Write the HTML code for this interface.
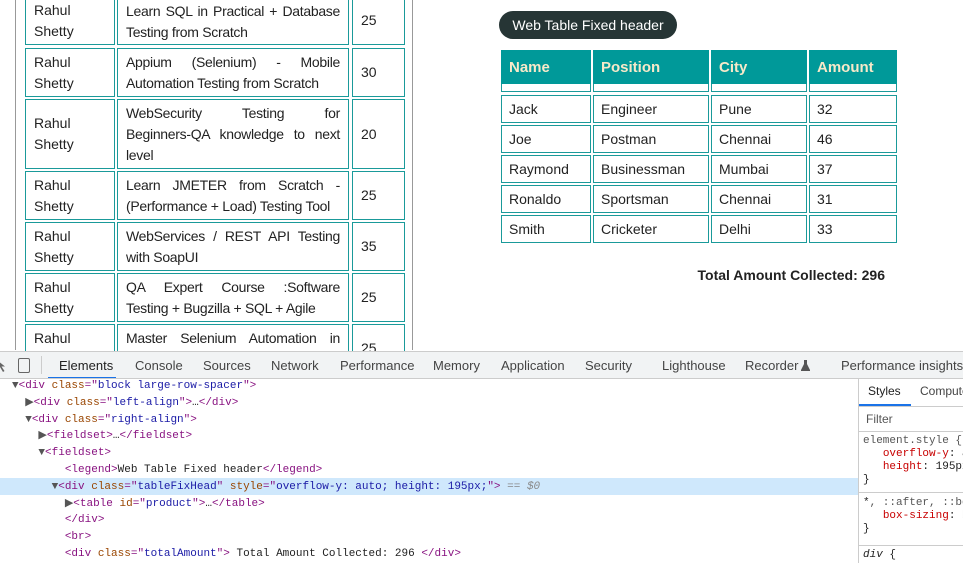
<!DOCTYPE html>
<html><head><meta charset="utf-8"><style>
*{box-sizing:border-box;margin:0;padding:0}
body{width:963px;height:563px;overflow:hidden;background:#fff;font-family:"Liberation Sans",sans-serif;position:relative;color:#222}
.c{position:absolute;border:1px solid #1a9a9a;font-size:14px;line-height:21px;padding:0 8px;display:flex;align-items:center}
.j{display:block;padding-top:0;font-size:14px;letter-spacing:-0.3px;white-space:nowrap}
.j div{text-align:justify;text-align-last:justify}
.j div.l{text-align-last:left}
.h{position:absolute;background:#009999;color:#f7e9c9;font-weight:bold;font-size:15px;padding:0 8px;display:flex;align-items:center;height:34px;top:50px}
.r{position:absolute;border:1px solid #1a9a9a;font-size:14px;padding:0 7px;display:flex;align-items:center;height:28px;color:#222}
.dt{position:absolute;top:351px;left:0;width:963px;height:28px;background:#f1f3f4;border-top:1px solid #ccc;border-bottom:1px solid #ccc;font-size:13px;color:#444;white-space:nowrap;overflow:hidden}
.dt span{position:absolute;top:6px}
.code{position:absolute;font-family:"Liberation Mono",monospace;font-size:11px;line-height:16.8px;left:12px;top:378px;white-space:pre;color:#222}
.tg{color:#881280}.at{color:#994500}.av{color:#1a1aa6}
.sty{position:absolute;left:858px;top:379px;width:105px;height:184px;border-left:1px solid #ccc;background:#fff;font-family:"Liberation Mono",monospace;font-size:11px;line-height:13px}
</style></head><body>
<div style="position:absolute;left:15px;top:0;width:1px;height:350px;background:#999"></div>
<div style="position:absolute;left:412px;top:0;width:1px;height:350px;background:#999"></div>

<div class="c" style="left:25px;top:-4px;width:90px;height:49px">Rahul<br>Shetty</div>
<div class="c j" style="left:117px;top:-4px;width:232px;height:49px;padding-top:4px"><div>Learn SQL in Practical + Database</div><div class="l">Testing from Scratch</div></div>
<div class="c" style="left:352px;top:-4px;width:53px;height:49px">25</div>

<div class="c" style="left:25px;top:48px;width:90px;height:49px">Rahul<br>Shetty</div>
<div class="c j" style="left:117px;top:48px;width:232px;height:49px;padding-top:3px"><div>Appium (Selenium) - Mobile</div><div class="l">Automation Testing from Scratch</div></div>
<div class="c" style="left:352px;top:48px;width:53px;height:49px">30</div>

<div class="c" style="left:25px;top:99px;width:90px;height:70px">Rahul<br>Shetty</div>
<div class="c j" style="left:117px;top:99px;width:232px;height:70px;padding-top:3px"><div>WebSecurity Testing for</div><div>Beginners-QA knowledge to next</div><div class="l">level</div></div>
<div class="c" style="left:352px;top:99px;width:53px;height:70px">20</div>

<div class="c" style="left:25px;top:171px;width:90px;height:49px">Rahul<br>Shetty</div>
<div class="c j" style="left:117px;top:171px;width:232px;height:49px;padding-top:3px"><div>Learn JMETER from Scratch -</div><div class="l">(Performance + Load) Testing Tool</div></div>
<div class="c" style="left:352px;top:171px;width:53px;height:49px">25</div>

<div class="c" style="left:25px;top:222px;width:90px;height:49px">Rahul<br>Shetty</div>
<div class="c j" style="left:117px;top:222px;width:232px;height:49px;padding-top:3px"><div>WebServices / REST API Testing</div><div class="l">with SoapUI</div></div>
<div class="c" style="left:352px;top:222px;width:53px;height:49px">35</div>

<div class="c" style="left:25px;top:273px;width:90px;height:49px">Rahul<br>Shetty</div>
<div class="c j" style="left:117px;top:273px;width:232px;height:49px;padding-top:3px"><div>QA Expert Course :Software</div><div class="l">Testing + Bugzilla + SQL + Agile</div></div>
<div class="c" style="left:352px;top:273px;width:53px;height:49px">25</div>

<div class="c" style="left:25px;top:324px;width:90px;height:49px;display:block;padding-top:3px">Rahul</div>
<div class="c j" style="left:117px;top:324px;width:232px;height:49px;padding-top:3px"><div>Master Selenium Automation in</div></div>
<div class="c" style="left:352px;top:324px;width:53px;height:49px">25</div>

<div style="position:absolute;left:499px;top:11px;width:178px;height:28px;border-radius:14px;background:#263535;color:#fff;font-size:14px;display:flex;align-items:center;justify-content:center">Web Table Fixed header</div>

<div class="r" style="left:501px;top:64px;width:90px"></div>
<div class="r" style="left:593px;top:64px;width:116px"></div>
<div class="r" style="left:711px;top:64px;width:96px"></div>
<div class="r" style="left:809px;top:64px;width:88px"></div>
<div class="h" style="left:501px;width:90px">Name</div>
<div class="h" style="left:593px;width:116px">Position</div>
<div class="h" style="left:711px;width:96px">City</div>
<div class="h" style="left:809px;width:88px">Amount</div>

<div class="r" style="left:501px;top:95px;width:90px">Jack</div><div class="r" style="left:593px;top:95px;width:116px">Engineer</div><div class="r" style="left:711px;top:95px;width:96px">Pune</div><div class="r" style="left:809px;top:95px;width:88px">32</div>
<div class="r" style="left:501px;top:125px;width:90px">Joe</div><div class="r" style="left:593px;top:125px;width:116px">Postman</div><div class="r" style="left:711px;top:125px;width:96px">Chennai</div><div class="r" style="left:809px;top:125px;width:88px">46</div>
<div class="r" style="left:501px;top:155px;width:90px">Raymond</div><div class="r" style="left:593px;top:155px;width:116px">Businessman</div><div class="r" style="left:711px;top:155px;width:96px">Mumbai</div><div class="r" style="left:809px;top:155px;width:88px">37</div>
<div class="r" style="left:501px;top:185px;width:90px">Ronaldo</div><div class="r" style="left:593px;top:185px;width:116px">Sportsman</div><div class="r" style="left:711px;top:185px;width:96px">Chennai</div><div class="r" style="left:809px;top:185px;width:88px">31</div>
<div class="r" style="left:501px;top:215px;width:90px">Smith</div><div class="r" style="left:593px;top:215px;width:116px">Cricketer</div><div class="r" style="left:711px;top:215px;width:96px">Delhi</div><div class="r" style="left:809px;top:215px;width:88px">33</div>

<div style="position:absolute;right:78px;top:267px;font-size:14px;font-weight:bold;color:#222">Total Amount Collected: 296</div>

<div class="dt">
<svg style="position:absolute;left:-4px;top:7px" width="10" height="14" viewBox="0 0 10 14"><path d="M1 1 L1 11 L4 8 L7 13 L8.5 12 L5.5 7.5 L9 7.5 Z" fill="#666"/></svg>
<div style="position:absolute;left:18px;top:6px;width:12px;height:15px;border:1.5px solid #666;border-radius:2px"></div>
<div style="position:absolute;left:41px;top:4px;width:1px;height:18px;background:#ccc"></div>
<span style="left:59px;color:#222">Elements</span>
<div style="position:absolute;left:48px;top:25px;width:68px;height:2px;background:#1a73e8"></div>
<span style="left:135px">Console</span><span style="left:203px">Sources</span><span style="left:271px">Network</span><span style="left:340px">Performance</span><span style="left:433px">Memory</span><span style="left:501px">Application</span><span style="left:585px">Security</span><span style="left:662px">Lighthouse</span><span style="left:745px">Recorder</span>
<svg style="position:absolute;left:801px;top:8px" width="9" height="11" viewBox="0 0 9 11"><path d="M3 0 H6 V4 L9 10 V11 H0 V10 L3 4 Z" fill="#555"/></svg>
<span style="left:841px">Performance insights</span>
</div>

<div style="position:absolute;left:0;top:478px;width:858px;height:17px;background:#cfe8fc"></div>
<div class="code"><span style="color:#555">▼</span><span class="tg">&lt;div </span><span class="at">class</span><span class="tg">="</span><span class="av">block large-row-spacer</span><span class="tg">"&gt;</span>
  <span style="color:#555">▶</span><span class="tg">&lt;div </span><span class="at">class</span><span class="tg">="</span><span class="av">left-align</span><span class="tg">"&gt;</span>…<span class="tg">&lt;/div&gt;</span>
  <span style="color:#555">▼</span><span class="tg">&lt;div </span><span class="at">class</span><span class="tg">="</span><span class="av">right-align</span><span class="tg">"&gt;</span>
    <span style="color:#555">▶</span><span class="tg">&lt;fieldset&gt;</span>…<span class="tg">&lt;/fieldset&gt;</span>
    <span style="color:#555">▼</span><span class="tg">&lt;fieldset&gt;</span>
        <span class="tg">&lt;legend&gt;</span>Web Table Fixed header<span class="tg">&lt;/legend&gt;</span>
      <span style="color:#555">▼</span><span class="tg">&lt;div </span><span class="at">class</span><span class="tg">="</span><span class="av">tableFixHead</span><span class="tg">" </span><span class="at">style</span><span class="tg">="</span><span class="av">overflow-y: auto; height: 195px;</span><span class="tg">"&gt;</span> <span style="color:#888">== <i>$0</i></span>
        <span style="color:#555">▶</span><span class="tg">&lt;table </span><span class="at">id</span><span class="tg">="</span><span class="av">product</span><span class="tg">"&gt;</span>…<span class="tg">&lt;/table&gt;</span>
        <span class="tg">&lt;/div&gt;</span>
        <span class="tg">&lt;br&gt;</span>
        <span class="tg">&lt;div </span><span class="at">class</span><span class="tg">="</span><span class="av">totalAmount</span><span class="tg">"&gt;</span> Total Amount Collected: 296 <span class="tg">&lt;/div&gt;</span></div>

<div class="sty">
<div style="position:absolute;left:9px;top:6px;font-family:'Liberation Sans',sans-serif;font-size:12px;color:#222">Styles</div>
<div style="position:absolute;left:61px;top:6px;font-family:'Liberation Sans',sans-serif;font-size:12px;color:#444">Computed</div>
<div style="position:absolute;left:0;top:25px;width:52px;height:2px;background:#1a73e8"></div>
<div style="position:absolute;left:0;top:27px;width:105px;height:1px;background:#ccc"></div>
<div style="position:absolute;left:7px;top:34px;font-family:'Liberation Sans',sans-serif;font-size:12px;color:#555">Filter</div>
<div style="position:absolute;left:0;top:52px;width:105px;height:1px;background:#ccc"></div>
<div style="position:absolute;left:4px;top:56px;white-space:pre;color:#555">element.style {
   <span style="color:#c80000">overflow-y</span><span style="color:#222">: a</span>
   <span style="color:#c80000">height</span><span style="color:#222">: 195px</span>
<span style="color:#222">}</span></div>
<div style="position:absolute;left:0;top:113px;width:105px;height:1px;background:#ccc"></div>
<div style="position:absolute;left:4px;top:118px;white-space:pre;color:#555"><span style="color:#222">*</span>, ::after, ::be
   <span style="color:#c80000">box-sizing</span><span style="color:#222">: b</span>
<span style="color:#222">}</span></div>
<div style="position:absolute;left:0;top:166px;width:105px;height:1px;background:#ccc"></div>
<div style="position:absolute;left:4px;top:170px;color:#222"><i>div</i> {</div>
</div>
</body></html>
